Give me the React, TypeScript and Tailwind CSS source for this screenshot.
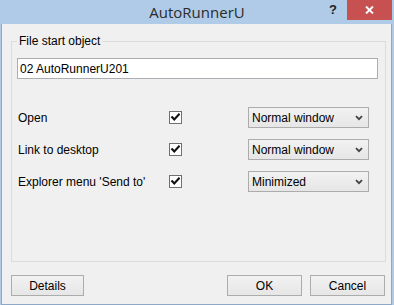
import React from "react";

const body = { fontFamily: '"Liberation Sans", Arial, sans-serif' };

function Check() {
  return (
    <div className="w-[13px] h-[13px] border border-[#707070] bg-white flex items-center justify-center flex-none">
      <svg width="11" height="11" viewBox="0 0 11 11">
        <path d="M2.2 5.2 L4.3 7.4 L8.8 2.6" fill="none" stroke="#111" strokeWidth="2.1" strokeLinecap="square" />
      </svg>
    </div>
  );
}

function Select({ value }: { value: string }) {
  return (
    <div className="w-[121px] h-[21px] border border-[#acacac] bg-gradient-to-b from-[#f2f2f2] to-[#e6e6e6] flex items-center pl-[3px] pr-[5px] text-[12px] text-black">
      <span className="flex-1 leading-none">{value}</span>
      <svg width="8" height="6" viewBox="0 0 8 6">
        <path d="M1 1.2 L4 4.2 L7 1.2" fill="none" stroke="#444" strokeWidth="1.8" />
      </svg>
    </div>
  );
}

function Row({ label, value }: { label: string; value: string }) {
  return (
    <div className="flex items-center h-[21px]">
      <div className="w-[157px] flex-none pl-[6px] text-[12px] text-black leading-none">{label}</div>
      <Check />
      <div className="ml-[66px] flex-none">
        <Select value={value} />
      </div>
    </div>
  );
}

function Btn({ label, w }: { label: string; w: string }) {
  return (
    <div className={`${w} h-[21px] border border-[#acacac] bg-gradient-to-b from-[#f2f2f2] to-[#e6e6e6] flex items-center justify-center text-[12px] text-black`}>
      {label}
    </div>
  );
}

export default function App() {
  return (
    <div className="w-[394px] h-[305px] bg-[#afcbe8] flex flex-col overflow-hidden" style={body}>
      <div className="h-[24px] flex-none relative flex items-center justify-center">
        <span className="text-[15px] text-[#2b2b2b] leading-none" style={{ fontFamily: '"Open Sans", sans-serif' }}>
          AutoRunnerU
        </span>
        <span className="absolute left-[329px] top-[3px] text-[13px] font-bold text-[#222] leading-none" style={{ fontFamily: '"Liberation Sans", sans-serif' }}>?</span>
        <div className="absolute left-[347px] top-0 w-[45px] h-[20px] bg-[#c75050] flex items-center justify-center">
          <svg width="9" height="8" viewBox="0 0 9 8">
            <path d="M1 0.5 L8 7.5 M8 0.5 L1 7.5" stroke="#fff" strokeWidth="1.9" />
          </svg>
        </div>
      </div>
      <div className="flex-1 ml-[1px] mr-[2px] border-l border-r border-b border-[#8fa8c6] bg-[#f0f0f0] flex flex-col">
        <fieldset className="mt-[10px] ml-[9px] w-[375px] h-[228px] border border-[#dcdcdc] p-0 m-0 min-w-0">
          <legend className="ml-[5px] px-[2px] text-[12px] leading-[14px] text-black">File start object</legend>
          <div className="mt-[10px] ml-[5px] w-[361px] h-[21px] border border-[#abadb3] bg-white flex items-center pl-[2px] text-[12px] text-black">
            02 AutoRunnerU201
          </div>
          <div className="mt-[28px] flex flex-col gap-[11px]">
            <Row label="Open" value="Normal window" />
            <Row label="Link to desktop" value="Normal window" />
            <Row label="Explorer menu 'Send to'" value="Minimized" />
          </div>
        </fieldset>
        <div className="mt-[13px] ml-[9px] mr-[6px] flex items-center">
          <Btn label="Details" w="w-[73px]" />
          <div className="flex-1" />
          <Btn label="OK" w="w-[75px]" />
          <div className="w-[8px]" />
          <Btn label="Cancel" w="w-[75px]" />
        </div>
      </div>
    </div>
  );
}
